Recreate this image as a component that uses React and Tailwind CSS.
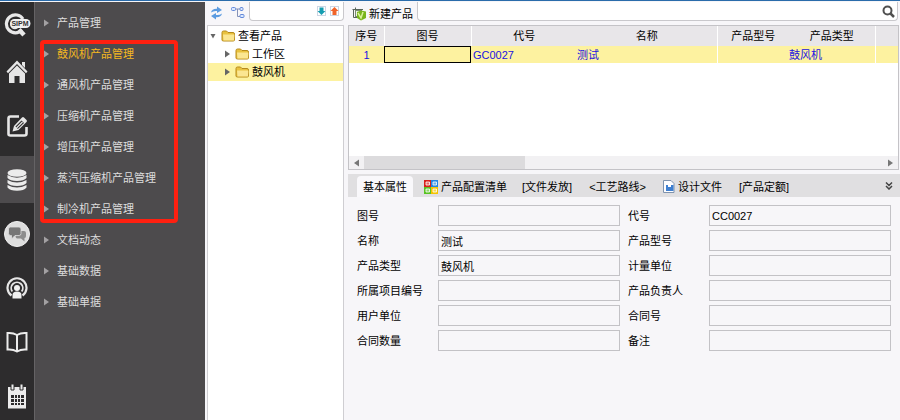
import React from "react";

const NAV = [
  "产品管理", "鼓风机产品管理", "通风机产品管理", "压缩机产品管理", "增压机产品管理",
  "蒸汽压缩机产品管理", "制冷机产品管理", "文档动态", "基础数据", "基础单据",
];

const FIELDS = [
  ["图号", ""], ["代号", "CC0027"],
  ["名称", "测试"], ["产品型号", ""],
  ["产品类型", "鼓风机"], ["计量单位", ""],
  ["所属项目编号", ""], ["产品负责人", ""],
  ["用户单位", ""], ["合同号", ""],
  ["合同数量", ""], ["备注", ""],
];

function SipmIcon() {
  return (
    <svg width="28" height="24" viewBox="0 0 28 24" aria-hidden="true">
      <path d="M20 6 A9 9 0 1 0 19 17" fill="none" stroke="#e8e8e8" strokeWidth="3.200" />
      <path d="M15 9 A4 4 0 1 0 15 14" fill="none" stroke="#e8e8e8" strokeWidth="1.500" />
      <path d="M16 16.500 L21 22" stroke="#e8e8e8" strokeWidth="4.500" />
      <rect x="7" y="6" width="20.500" height="9" rx="4.500" fill="#f0f0f0" />
      <text x="17" y="13" textAnchor="middle" fontFamily="Liberation Sans, sans-serif" fontWeight="700" fontSize="7" fill="#333">SIPM</text>
    </svg>
  );
}

function HomeIcon() {
  return (
    <svg width="22" height="24" viewBox="0 0 22 24" aria-hidden="true" fill="#e6e6e6">
      <path d="M11 0.500 L21.500 11.500 L20 13.200 L11 4 L2 13.200 L0.500 11.500 Z" />
      <path d="M16 2 H19 V8 L16 5 Z" />
      <path d="M11 5.500 L19 13.500 V23 H13.500 V16 H8.500 V23 H3 V13.500 Z" />
    </svg>
  );
}

function EditIcon() {
  return (
    <svg width="23" height="24" viewBox="0 0 23 24" aria-hidden="true">
      <path d="M13 2.500 H4.500 Q2.500 2.500 2.500 4.500 V20 Q2.500 21.500 4.500 21.500 H18.500 Q20.500 21.500 20.500 19.500 V13" fill="none" stroke="#e6e6e6" strokeWidth="2.600" />
      <path d="M6.500 17.500 L8 12 L16 3.500 Q17 2.500 18 3.500 L20.500 6 Q21.500 7 20.500 8 L12.500 16 Z" fill="#e6e6e6" />
      <path d="M9.500 12.500 L15.500 6.500 L18 9 L11.800 15 Z" fill="#2d2c2d" />
      <path d="M10.500 14 L16.500 8" stroke="#e6e6e6" strokeWidth="1.300" />
    </svg>
  );
}

function DatabaseIcon() {
  return (
    <svg width="20" height="22" viewBox="0 0 20 22" aria-hidden="true" fill="#ececec">
      <ellipse cx="10" cy="4" rx="9.500" ry="3.800" />
      <path d="M0.500 6 Q10 11.500 19.500 6 V9 Q17 12 10 12 Q3 12 0.500 9 Z" />
      <path d="M0.500 11 Q10 16 19.500 11 V14 Q17 17 10 17 Q3 17 0.500 14 Z" />
      <path d="M0.500 16 Q10 21 19.500 16 V18.500 Q17 21.800 10 21.800 Q3 21.800 0.500 18.500 Z" />
    </svg>
  );
}

function ChatIcon() {
  return (
    <svg width="28" height="28" viewBox="0 0 28 28" aria-hidden="true">
      <circle cx="14" cy="14" r="12.500" fill="#dedede" stroke="#f1f1f1" />
      <path d="M16 11 H21 Q23 11 23 13 V16 Q23 18 21.500 18 V21.500 L18 18.500 H14 Q12.500 18 12.500 16 Z" fill="#8d8d8d" />
      <path d="M7.500 7 H16 Q18 7 18 9 V13.500 Q18 15.500 16 15.500 H12 L8.500 19 V15.500 H7.500 Q5.500 15.500 5.500 13.500 V9 Q5.500 7 7.500 7 Z" fill="#777" stroke="#dedede" strokeWidth="0.800" />
    </svg>
  );
}

function PodcastIcon() {
  return (
    <svg width="22" height="24" viewBox="0 0 22 24" aria-hidden="true">
      <path d="M5.500 19.500 A9.500 9.500 0 1 1 16.500 19.500" fill="none" stroke="#e6e6e6" strokeWidth="2.200" />
      <path d="M6.300 15.500 A5.800 5.800 0 1 1 15.700 15.500" fill="none" stroke="#e6e6e6" strokeWidth="1.800" />
      <circle cx="11" cy="12" r="3" fill="#f0f0f0" />
      <path d="M6.500 22.500 V19 Q6.500 15.500 11 15.500 Q15.500 15.500 15.500 19 V22.500 Z" fill="#f0f0f0" />
    </svg>
  );
}

function BookIcon() {
  return (
    <svg width="22" height="22" viewBox="0 0 22 22" aria-hidden="true" fill="none" stroke="#ececec" strokeWidth="2">
      <path d="M11 4 Q7 1.500 1.500 2 V18.500 Q7 18 11 20.500 Q15 18 20.500 18.500 V2 Q15 1.500 11 4 Z" />
      <path d="M11 4 V20" />
    </svg>
  );
}

function CalendarIcon() {
  return (
    <svg width="20" height="26" viewBox="0 0 20 26" aria-hidden="true">
      <path d="M1 4 H19 V25.500 H1 Z" fill="#ececec" />
      <path d="M4 1 H7 V7 H4 Z M13 1 H16 V7 H13 Z" fill="#ececec" stroke="#2d2c2d" />
      <path d="M4 12 H7 V15 H4 Z M8 12 H10 V15 H8 Z M11 12 H13 V15 H11 Z M14 12 H17 V15 H14 Z M4 16 H7 V19 H4 Z M8 16 H10 V19 H8 Z M11 16 H13 V19 H11 Z M14 16 H17 V19 H14 Z M4 20 H7 V22 H4 Z M8 20 H10 V22 H8 Z M11 20 H13 V22 H11 Z M14 20 H17 V22 H14 Z" fill="#2d2c2d" />
    </svg>
  );
}

const RAIL = [
  ["首页", HomeIcon], ["编辑", EditIcon], ["数据", DatabaseIcon], ["消息", ChatIcon],
  ["广播", PodcastIcon], ["文档", BookIcon], ["日历", CalendarIcon],
];

function RefreshIcon() {
  return (
    <svg width="13" height="14" viewBox="0 0 13 14" aria-hidden="true" fill="#5b9be0">
      <path d="M1 6.500 Q2 2.500 7 2.800 V0.500 L12 4 L7 7 V5 Q3.500 4.500 1 6.500 Z" />
      <path d="M12 7.500 Q11 11.500 6 11.200 V13.500 L1 10 L6 7 V9 Q9.500 9.500 12 7.500 Z" />
    </svg>
  );
}

function HierarchyIcon() {
  return (
    <svg width="14" height="13" viewBox="0 0 14 13" aria-hidden="true">
      <path d="M4 3 H9 M6.500 3 V10.500 H9" fill="none" stroke="#8592b8" />
      <g fill="#dbe8ff" stroke="#6288d8">
        <rect x="0.500" y="1.500" width="4" height="3" rx="1" />
        <rect x="9" y="1.500" width="3" height="3" rx="1" />
        <rect x="9" y="8.500" width="4" height="3" rx="1" />
      </g>
    </svg>
  );
}

function ArrowTile({ up }) {
  return (
    <svg width="9" height="10" viewBox="0 0 9 10" aria-hidden="true">
      <rect x="0.500" y="0.500" width="8" height="9" fill="#fff" stroke="#ccd6e4" />
      {up
        ? <path d="M4.500 1 L8.500 5 H6.500 V9 H2.500 V5 H0.500 Z" fill="#f0642a" />
        : <path d="M4.500 9 L8.500 5 H6.500 V1.500 H2.500 V5 H0.500 Z" fill="#159db0" />}
    </svg>
  );
}

function FolderIcon() {
  return (
    <svg width="15" height="12" viewBox="0 0 15 12" aria-hidden="true">
      <path d="M1 10 V2.500 Q1 1 2.500 1 H5.500 L7 2.500 H12 Q13.500 2.500 13.500 4 V10 Q13.500 11 12 11 H2.500 Q1 11 1 10 Z" fill="#e9c23f" stroke="#b68a1c" />
      <path d="M2 4.500 H13.500 L13 10.500 H2.500 Z" fill="#fbe692" />
    </svg>
  );
}

function NewProductIcon() {
  return (
    <svg width="15" height="14" viewBox="0 0 15 14" aria-hidden="true">
      <path d="M0.500 2.500 H11 M3.500 0.500 V11 M1.500 2.500 V10.500 H6" fill="none" stroke="#59655a" />
      <rect x="3.500" y="3.500" width="6" height="6" fill="#eef3e8" stroke="#7a8b70" />
      <path d="M5 5 L9 3.500 L14 4.500 V11 L9 13.500 L5 11 Z" fill="#79b51c" />
      <path d="M6 6 L9 11 L11 5" fill="none" stroke="#d9f19a" strokeWidth="1.500" />
    </svg>
  );
}

function SearchIcon() {
  return (
    <svg width="13" height="13" viewBox="0 0 13 13" aria-hidden="true" fill="none" stroke="#505050">
      <circle cx="5.500" cy="5.500" r="4" strokeWidth="2" />
      <path d="M8.500 8.500 L12 12" strokeWidth="2.500" />
    </svg>
  );
}

function TilesIcon() {
  return (
    <svg width="14" height="14" viewBox="0 0 14 14" aria-hidden="true">
      <path d="M0 0 H7 V7 H0 Z" fill="#d8201c" />
      <path d="M7 0 H14 V7 H7 Z" fill="#2385e2" />
      <path d="M0 7 H7 V14 H0 Z" fill="#58c322" />
      <path d="M7 7 H14 V14 H7 Z" fill="#f5c400" />
      <path d="M2 2 H5.500 V5 H2 Z M9 2 H12.500 V5 H9 Z M2 9 H5.500 V12 H2 Z M9 9 H12.500 V12 H9 Z" fill="#ffffff55" stroke="#fff" strokeWidth="0.800" />
    </svg>
  );
}

function DesignFileIcon() {
  return (
    <svg width="12" height="13" viewBox="0 0 12 13" aria-hidden="true">
      <path d="M0.500 0.500 H8 L11 3.500 V12.500 H0.500 Z" fill="#fdfdff" stroke="#7f93ae" />
      <path d="M3 5 H5 V7 H8 V5 H10.500 V11 H3 Z" fill="#3f7fd0" />
    </svg>
  );
}

function Caret({ open, className }) {
  return (
    <svg width="7" height="8" viewBox="0 0 7 8" aria-hidden="true" className={className} fill="currentColor">
      {open ? <path d="M0.500 2 H5.500 L3 6.500 Z" /> : <path d="M1 0.500 L6 4 L1 7.500 Z" />}
    </svg>
  );
}

function TreeRow({ label, open, child, selected }) {
  return (
    <li className={selected ? "bg-[#fdf2a0]" : ""}>
      <button type="button" className={`flex h-[18px] w-full items-center ${child ? "pl-4" : "pl-[2px]"}`}>
        <Caret open={open} className="mr-1 text-[#666]" />
        <FolderIcon />
        <span className="ml-[2px]">{label}</span>
      </button>
    </li>
  );
}

function Tab({ icon, children, className }) {
  return (
    <button type="button" role="tab" aria-selected="false" className={`flex h-full items-center gap-[3px] pt-[2px] whitespace-nowrap ${className}`}>
      {icon}
      {children}
    </button>
  );
}

export default function App() {
  return (
    <div className="flex min-h-screen flex-col border-t border-[#2a6cab] bg-[#f7f6f9] pt-px font-['Liberation_Sans','Noto_Sans_CJK_SC',sans-serif] text-[11px] leading-[14px] text-black">
      <div className="flex flex-1">
        <div className="flex w-[34px] shrink-0 flex-col bg-[#2d2c2d]">
          <button type="button" aria-label="SIPM" className="flex h-[46px] items-center justify-center"><SipmIcon /></button>
          <div className="flex flex-col gap-[7px]">
            {RAIL.map(([label, Icon]) => (
              <button key={label} type="button" aria-label={label} className={`flex h-[47px] items-center justify-center ${label === "数据" ? "bg-[#4d4b4d]" : ""}`}>
                <Icon />
              </button>
            ))}
          </div>
        </div>

        <nav className="relative w-[171px] shrink-0 border-l border-[#656365] bg-[#4d4b4d] pt-[5px] text-[#dddddd]">
          <ul>
            {NAV.map((item, i) => (
              <li key={item}>
                <a href="#" className={`flex h-[31px] items-center gap-[7px] pl-2 ${i === 1 ? "text-[#f5b921]" : ""}`}>
                  <Caret className="text-[#a3a1a3]" />
                  {item}
                </a>
              </li>
            ))}
          </ul>
          <div className="pointer-events-none absolute top-[38px] left-[5px] h-[183px] w-[138px] rounded-[4px] border-4 border-[#ff2010]" />
        </nav>

        <section className="ml-[2px] flex w-[137px] shrink-0 flex-col">
          <div className="flex h-[23px] items-start">
            <button type="button" aria-label="刷新" className="mt-1 ml-[3px]"><RefreshIcon /></button>
            <button type="button" aria-label="层级" className="mt-1 ml-2"><HierarchyIcon /></button>
            <div className="ml-1 flex h-[19px] min-w-0 flex-1 items-center gap-1 rounded-b-[4px] border border-t-0 border-[#c9c8cc] bg-white pr-1">
              <input type="text" aria-label="筛选" className="min-w-0 flex-1 bg-transparent outline-none" />
              <button type="button" aria-label="向下查找"><ArrowTile /></button>
              <button type="button" aria-label="向上查找"><ArrowTile up /></button>
            </div>
          </div>
          <ul className="flex-1 border border-b-0 border-[#cfced2] bg-white pt-px">
            <TreeRow label="查看产品" open />
            <TreeRow label="工作区" child />
            <TreeRow label="鼓风机" child selected />
          </ul>
        </section>

        <main className="ml-1 min-w-0 flex-1">
          <div className="flex h-[23px] items-start">
            <button type="button" className="ml-1 flex h-[23px] w-[61px] items-center gap-[2px] whitespace-nowrap">
              <NewProductIcon />
              新建产品
            </button>
            <div className="mr-[2px] ml-1 flex h-[19px] min-w-0 flex-1 items-center rounded-b-[4px] border border-t-0 border-[#c9c8cc] bg-white pr-[2px]">
              <input type="text" aria-label="搜索" className="min-w-0 flex-1 bg-transparent outline-none" />
              <button type="button" aria-label="查询"><SearchIcon /></button>
            </div>
          </div>

          <div className="mr-px flex h-[145px] flex-col border border-[#c4c3c7] bg-white">
            <table className="w-full table-fixed border-collapse">
              <colgroup>
                <col className="w-[35px]" />
                <col className="w-[87px]" />
                <col className="w-[106px]" />
                <col />
                <col className="w-[72px]" />
                <col className="w-[86px]" />
                <col className="w-[23px]" />
              </colgroup>
              <thead>
                <tr className="h-[20px] bg-[#e8e6e9]">
                  <th className="border-r border-white p-0 font-normal">序号</th>
                  <th className="border-r border-white p-0 font-normal">图号</th>
                  <th className="p-0 font-normal">代号</th>
                  <th className="border-r border-white p-0 font-normal">名称</th>
                  <th className="p-0 font-normal">产品型号</th>
                  <th className="border-r border-white p-0 font-normal">产品类型</th>
                  <th className="p-0" />
                </tr>
              </thead>
              <tbody>
                <tr className="h-[17px] bg-[#fdf2a0] text-[#1a12e0]">
                  <td className="p-0 text-center">1</td>
                  <td className="p-0"><div className="h-[17px] border border-black" /></td>
                  <td className="p-0 pl-[2px]">GC0027</td>
                  <td className="border-r border-white p-0">测试</td>
                  <td className="p-0" />
                  <td className="border-r border-white p-0">鼓风机</td>
                  <td className="p-0" />
                </tr>
              </tbody>
            </table>
            <div className="mt-auto flex h-[13px] items-center bg-[#f2f1f3] text-[#777]">
              <span className="flex w-[15px] justify-center"><Caret className="rotate-180" /></span>
              <span className="h-full w-[161px] bg-[#dcdbdd]" />
              <span className="ml-auto flex w-[15px] justify-center"><Caret /></span>
            </div>
          </div>

          <div role="tablist" className="mt-1 flex h-[23px] items-center bg-[#e0dfe1]">
            <button type="button" role="tab" aria-selected="true" className="ml-[9px] h-[21px] w-[56px] self-end rounded-t-[4px] bg-[#f9f8fb]">基本属性</button>
            <Tab icon={<TilesIcon />} className="ml-[11px]">产品配置清单</Tab>
            <Tab className="ml-[15px]">[文件发放]</Tab>
            <Tab className="ml-[17px]">&lt;工艺路线&gt;</Tab>
            <Tab icon={<DesignFileIcon />} className="ml-[17px]">设计文件</Tab>
            <Tab className="ml-[17px]">[产品定额]</Tab>
            <button type="button" aria-label="更多" className="mr-[7px] ml-auto">
              <svg width="8" height="8" viewBox="0 0 8 8" aria-hidden="true" fill="none" stroke="#444" strokeWidth="1.500">
                <path d="M1 0.500 L4 3.500 L7 0.500 M1 4 L4 7 L7 4" />
              </svg>
            </button>
          </div>

          <form className="grid grid-cols-2 gap-x-2 gap-y-1 px-[9px] pt-2">
            {FIELDS.map(([label, value]) => (
              <label key={label} className="flex h-[21px] items-center">
                <span className="w-[81px] shrink-0">{label}</span>
                <input type="text" readOnly defaultValue={value} className="h-full min-w-0 flex-1 border border-[#c3c2c6] bg-[#f7f6f9] px-[2px] outline-none" />
              </label>
            ))}
          </form>
        </main>
      </div>
    </div>
  );
}
